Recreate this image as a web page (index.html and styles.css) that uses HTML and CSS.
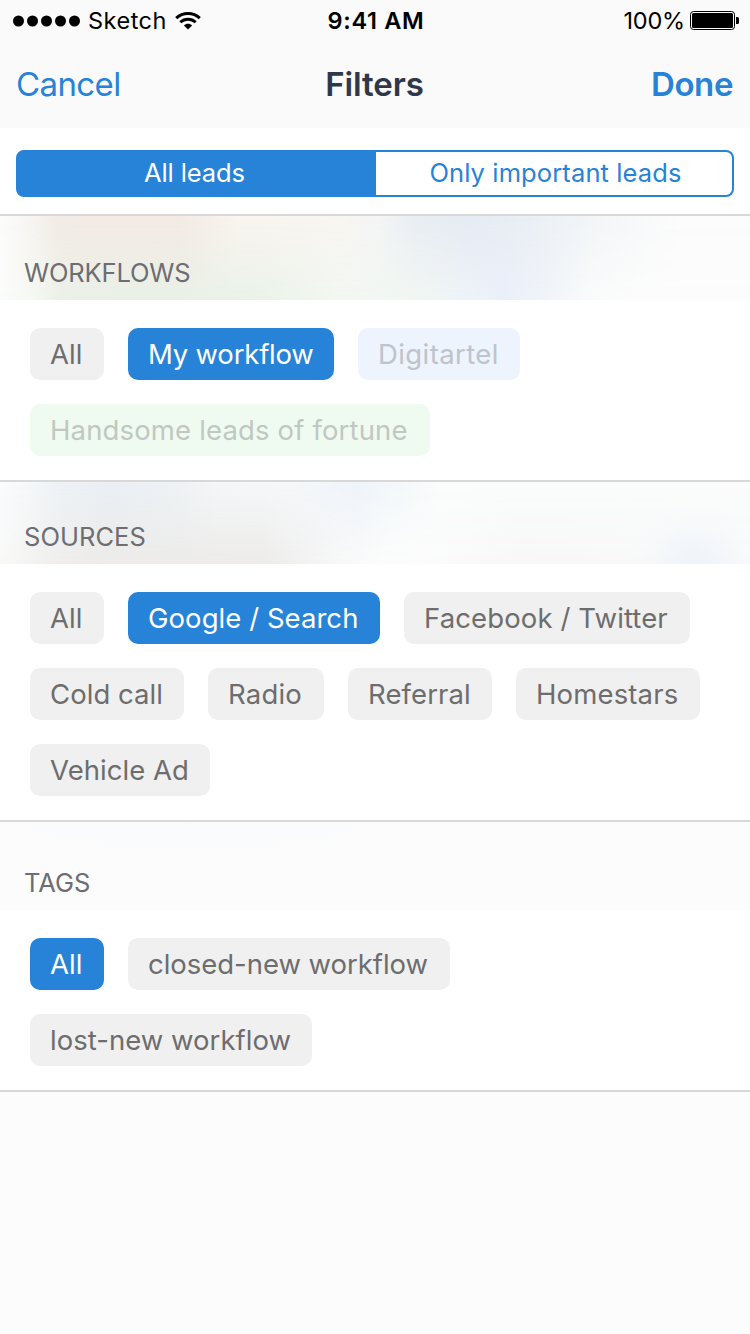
FILE: index.html
```html
<!DOCTYPE html>
<html lang="en">
<head>
<meta charset="utf-8">
<title>Filters</title>
<link rel="stylesheet" href="styles.css">
</head>
<body>
<header class="top">
  <div class="status">
    <div class="status-left">
      <svg class="signal" width="68" height="12" viewBox="0 0 68 12"><circle cx="5.5" cy="6" r="5.5"/><circle cx="19.5" cy="6" r="5.5"/><circle cx="33.5" cy="6" r="5.5"/><circle cx="47.5" cy="6" r="5.5"/><circle cx="61.5" cy="6" r="5.5"/></svg>
      <span class="carrier">Sketch</span>
      <svg class="wifi" width="26" height="18" viewBox="0 0 26 18"><path d="M1.2 6.1C7.8-.1 18.2-.1 24.8 6.1M5.3 10.3c4.3-4 11.1-4 15.4 0" fill="none" stroke="#000" stroke-width="2.9"/><path d="M8.9 13.4c2.3-2.2 5.9-2.2 8.2 0L13 17.5z"/></svg>
    </div>
    <span class="time">9:41 AM</span>
    <div class="status-right">
      <span class="percent">100%</span>
      <svg class="battery" width="49" height="19" viewBox="0 0 49 19"><rect x=".5" y=".5" width="44" height="18" rx="3" fill="none" stroke="#000"/><rect x="2" y="2" width="41" height="15" rx="1.5"/><path d="M46 6h1.5a1.5 1.5 0 0 1 1.5 1.5v4a1.5 1.5 0 0 1-1.5 1.5H46z"/></svg>
    </div>
  </div>
  <nav class="nav">
    <a class="cancel">Cancel</a>
    <h1 class="title">Filters</h1>
    <a class="done">Done</a>
  </nav>
</header>
<div class="switcher">
  <div class="segments">
    <div class="segment segment-on">All leads</div>
    <div class="segment segment-off">Only important leads</div>
  </div>
</div>
<section>
  <h2 class="heading heading-workflows"><span>WORKFLOWS</span></h2>
  <div class="chips">
    <span class="chip w-all">All</span><span class="chip selected w-my">My workflow</span><span class="chip blue w-digi">Digitartel</span><span class="chip green w-hand">Handsome leads of fortune</span>
  </div>
</section>
<section>
  <h2 class="heading heading-sources"><span>SOURCES</span></h2>
  <div class="chips">
    <span class="chip w-all">All</span><span class="chip selected w-google">Google / Search</span><span class="chip w-face">Facebook / Twitter</span><span class="chip w-cold">Cold call</span><span class="chip w-radio">Radio</span><span class="chip w-ref">Referral</span><span class="chip w-home">Homestars</span><span class="chip w-vehicle">Vehicle Ad</span>
  </div>
</section>
<section>
  <h2 class="heading heading-tags"><span>TAGS</span></h2>
  <div class="chips">
    <span class="chip selected w-all">All</span><span class="chip w-closed">closed-new workflow</span><span class="chip w-lost">lost-new workflow</span>
  </div>
</section>
</body>
</html>
```
FILE: styles.css
```css
* { box-sizing: border-box; }
body { margin: 0; width: 750px; min-height: 1334px; background: #fcfcfc; font-family: Inter, "Liberation Sans", sans-serif; color: #6d6d6d; }
svg { display: block; flex: none; }
h1, h2 { margin: 0; font-weight: 400; }
span, a, h1 { white-space: nowrap; }

.top { height: 128px; background: #fafafa; }
.status { height: 40px; display: grid; grid-template-columns: 1fr auto 1fr; padding: 0 11px 0 13px; color: #000; font-size: 23.5px; line-height: 41px; }
.status-left, .status-right { display: flex; align-items: center; }
.status-right { justify-content: flex-end; }
.carrier { margin-left: 7px; width: 79px; letter-spacing: .5px; }
.wifi { margin-left: 8px; }
.time { font-weight: 600; letter-spacing: .7px; }
.percent { letter-spacing: -.2px; }
.battery { margin-left: 5px; }
.nav { height: 88px; display: grid; grid-template-columns: 1fr auto 1fr; padding: 0 17px 0 16px; font-size: 33px; line-height: 88px; color: #2783d7; }
.cancel { letter-spacing: -.6px; }
.title { font-size: 33px; font-weight: 600; color: #30374b; letter-spacing: -.1px; }
.done { font-weight: 600; text-align: right; letter-spacing: -.4px; }

.switcher { height: 88px; padding: 22px 16px 0; background: #fff; border-bottom: 2px solid #d8d8d8; }
.segments { height: 47px; display: flex; }
.segment { text-align: center; font-size: 25.5px; line-height: 42px; border: 2px solid #2783d7; }
.segment-on { width: 360px; padding-right: 3px; background: #2783d7; color: #fff; border-radius: 8px 0 0 8px; letter-spacing: -.1px; }
.segment-off { width: 358px; padding-left: 3px; border-left: 0; color: #2783d7; border-radius: 0 8px 8px 0; letter-spacing: .12px; }

.heading { position: relative; display: flex; align-items: flex-end; padding: 0 0 12px 24px; font-size: 25.5px; line-height: 30px; color: #6d6d72; }
.heading span { position: relative; }
/* Lower row of tints, faded into the upper row */
.heading::before { content: ""; position: absolute; inset: 0; -webkit-mask-image: linear-gradient(transparent, #000); mask-image: linear-gradient(transparent, #000); }
.heading-workflows {
  height: 84px;
  letter-spacing: -.15px;
  background: linear-gradient(90deg, #fcfcfb, #faf8f6 20px, #f3ede7 55px, #f4ebe5 80px, #f4ebe5 180px, #faf5f0 240px, #f9f6f2 340px, #f4f5f6 380px, #e9eef3 415px, #e6ebf4 470px, #eaf0f5 530px, #f4f6f8 600px, #fcfcfc 680px);
}
.heading-workflows::before {
  background: linear-gradient(90deg, #fbfcfa, #f3f8f1 35px, #ebf0e8 60px, #e9f0e7 160px, #eaf2e9 260px, #f2f7f1 340px, #f1f6f3 420px, #eef3f8 460px, #ebeffa 505px, #f0f3f8 545px, #f9fbfb 590px, #fcfcfc 650px);
}
.heading-sources {
  height: 82px;
  letter-spacing: .05px;
  background: linear-gradient(90deg, #fafcfd, #f5f8fa 30px, #eef2f6 60px, #ebeff5 110px, #eff3f6 180px, #f5f7f9 220px, #f6f8fa 290px, #eff4fa 355px, #f4f8fb 400px, #fbfcfc 440px, #fcfcfc);
}
.heading-sources::before {
  background:
    radial-gradient(ellipse 52px 54px at 695px 71px, #edf3fa, #edf3fa00),
    linear-gradient(90deg, #f9f9f8, #f0efed 50px, #ecebe9 100px, #ecebe9 260px, #f1f1f0 300px, #f8f8f8 340px, #fcfdfc 390px, #fafafa 460px, #f7f7f7 520px, #f7f8f8 650px, #f7f9fa);
}
.heading-tags { height: 88px; background: radial-gradient(ellipse 230px 36px at 190px 0, #f8fafc, #f8fafc00), #fcfcfc; }

.chips { display: flex; flex-wrap: wrap; gap: 24px; padding: 28px 30px 24px; background: #fff; border-bottom: 2px solid #d8d8d8; }
.chip { height: 52px; padding-left: 20px; border-radius: 10px; background: #f0f0f0; font-size: 27.5px; line-height: 52px; }
.selected { background: #2783d7; color: #fff; }
.blue { background: #edf4fd; color: #bfc3cb; }
.green { background: #effbf1; color: #c0c8c1; }
.w-all { width: 74px; letter-spacing: 0; }
.w-my { width: 206px; letter-spacing: -.2px; }
.w-digi { width: 162px; letter-spacing: .4px; }
.w-hand { width: 400px; letter-spacing: .15px; }
.w-google { width: 252px; letter-spacing: .05px; }
.w-face { width: 286px; letter-spacing: .12px; }
.w-cold { width: 154px; letter-spacing: .05px; }
.w-radio { width: 116px; letter-spacing: .2px; }
.w-ref { width: 144px; letter-spacing: .1px; }
.w-home { width: 184px; letter-spacing: .15px; }
.w-vehicle { width: 180px; letter-spacing: .05px; }
.w-closed { width: 322px; letter-spacing: -.03px; }
.w-lost { width: 282px; letter-spacing: .03px; }
```
